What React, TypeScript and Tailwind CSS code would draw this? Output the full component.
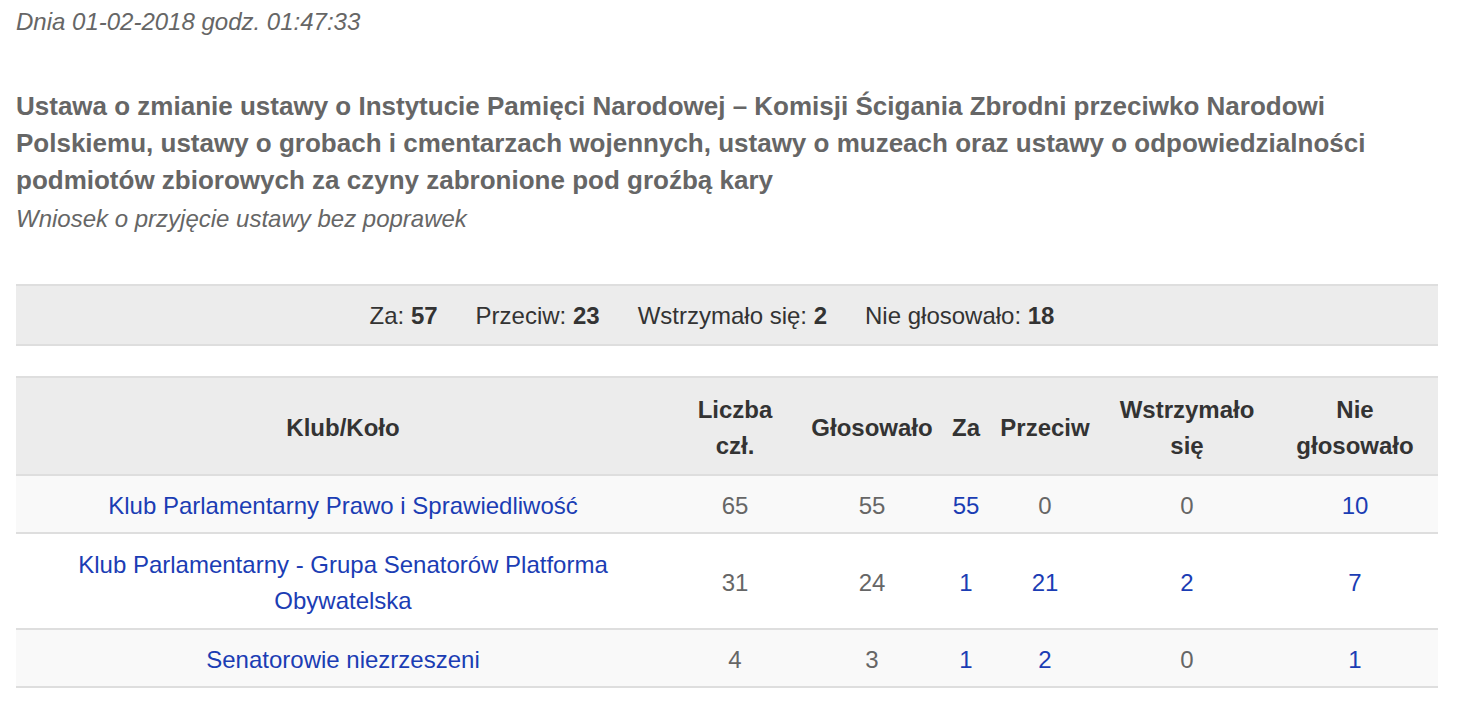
import React from 'react';

interface Row {
  club: string;
  members: number;
  voted: number;
  za: number;
  przeciw: number;
  wstrz: number;
  nie: number;
  striped: boolean;
}

const rows: Row[] = [
  { club: 'Klub Parlamentarny Prawo i Sprawiedliwość', members: 65, voted: 55, za: 55, przeciw: 0, wstrz: 0, nie: 10, striped: true },
  { club: 'Klub Parlamentarny - Grupa Senatorów Platforma Obywatelska', members: 31, voted: 24, za: 1, przeciw: 21, wstrz: 2, nie: 7, striped: false },
  { club: 'Senatorowie niezrzeszeni', members: 4, voted: 3, za: 1, przeciw: 2, wstrz: 0, nie: 1, striped: true },
];

// zero counts are plain text, everything else is a link
const Num = ({ value }: { value: number }) =>
  value === 0 ? <span>{value}</span> : <a href="#" className="text-[#1b3db4]">{value}</a>;

const App = () => {
  return (
    <div className="px-4 pt-[7px] text-[#666] bg-white min-h-[704px]" style={{ fontFamily: '"Liberation Sans", Arial, sans-serif' }}>
      <p className="italic text-[24px] leading-[30px]">Dnia 01-02-2018 godz. 01:47:33</p>

      <h2 className="mt-[51px] font-bold text-[26px] leading-[37px]">
        Ustawa o zmianie ustawy o Instytucie Pamięci Narodowej – Komisji Ścigania Zbrodni przeciwko Narodowi Polskiemu, ustawy o grobach i cmentarzach wojennych, ustawy o muzeach oraz ustawy o odpowiedzialności podmiotów zbiorowych za czyny zabronione pod groźbą kary
      </h2>
      <p className="italic text-[24px] leading-[40px]">Wniosek o przyjęcie ustawy bez poprawek</p>

      {/* Summary bar */}
      <div className="mt-[45px] w-[1422px] h-[62px] bg-[#ececec] border-t-2 border-b-2 border-[#dedede] flex items-center justify-center gap-[38px] pr-[30px] pt-[2px] text-[24px] text-[#333]">
        <span>Za: <b>57</b></span>
        <span>Przeciw: <b>23</b></span>
        <span>Wstrzymało się: <b>2</b></span>
        <span>Nie głosowało: <b>18</b></span>
      </div>

      <table className="mt-[30px] w-[1422px] table-fixed border-collapse text-[24px] text-center">
        <colgroup>
          <col className="w-[654px]" />
          <col className="w-[130px]" />
          <col className="w-[144px]" />
          <col className="w-[44px]" />
          <col className="w-[114px]" />
          <col className="w-[170px]" />
          <col className="w-[166px]" />
        </colgroup>
        <thead>
          <tr className="bg-[#ececec] border-t-2 border-b-2 border-[#dedede] text-[#333] font-bold h-[98px] leading-[36px]">
            <th className="px-1 pt-[3px]">Klub/Koło</th>
            <th className="px-1 pt-[3px]">Liczba<br />czł.</th>
            <th className="px-0 pt-[3px]">Głosowało</th>
            <th className="px-0 pt-[3px]">Za</th>
            <th className="px-0 pt-[3px]">Przeciw</th>
            <th className="px-0 pt-[3px]">Wstrzymało<br />się</th>
            <th className="px-0 pt-[3px]">Nie<br />głosowało</th>
          </tr>
        </thead>
        <tbody>
          {rows.map((r) => (
            <tr
              key={r.club}
              className={`border-b-2 border-[#dedede] leading-[36px] ${r.striped ? 'bg-[#f9f9f9] h-[58px]' : 'bg-white h-[96px]'}`}
            >
              <td className="px-[50px] pt-[3px]">
                <a href="#" className="text-[#1b3db4]">{r.club}</a>
              </td>
              <td className="pt-[3px]">{r.members}</td>
              <td className="pt-[3px]">{r.voted}</td>
              <td className="pt-[3px]"><Num value={r.za} /></td>
              <td className="pt-[3px]"><Num value={r.przeciw} /></td>
              <td className="pt-[3px]"><Num value={r.wstrz} /></td>
              <td className="pt-[3px]"><Num value={r.nie} /></td>
            </tr>
          ))}
        </tbody>
      </table>
    </div>
  );
};

export default App;
